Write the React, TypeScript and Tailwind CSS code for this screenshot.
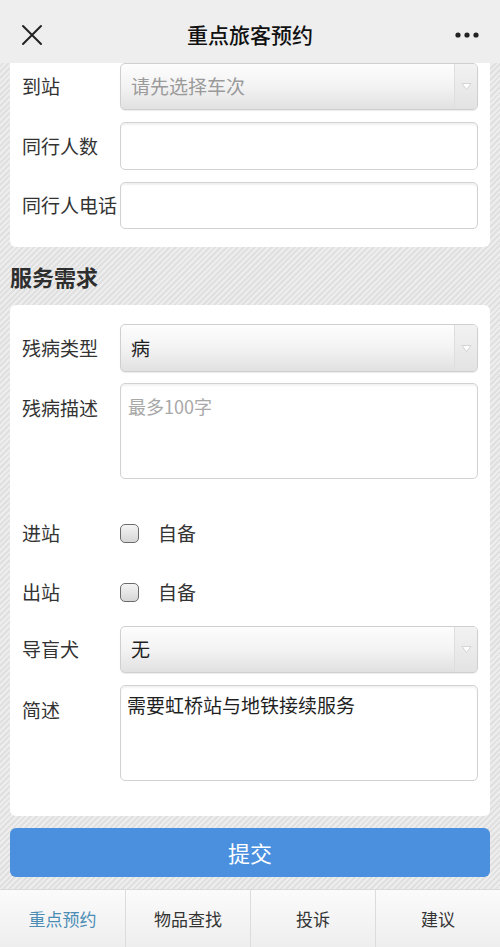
import React from "react";

function SelectBox({ text, placeholder }: { text: string; placeholder?: boolean }) {
  return (
    <div className="flex-1 h-full flex rounded-[5px] border border-[#cfcfcf] bg-[linear-gradient(to_bottom,#fdfdfd_0%,#f3f3f3_50%,#e1e1e1_100%)] shadow-[0_1px_1px_rgba(0,0,0,0.08)] overflow-hidden">
      <div className={`flex-1 flex items-center pl-[10px] text-[19px] ${placeholder ? "text-[#9a9a9a]" : "text-[#1f1f1f]"}`}>
        {text}
      </div>
      <div className="w-[23px] flex items-center justify-center border-l border-[#dedede] bg-[linear-gradient(to_bottom,#f2f2f2,#e3e3e3)]">
        <svg width="11" height="9" viewBox="0 0 11 9">
          <path d="M1 1.5 L10 1.5 L5.5 7.5 Z" fill="#fdfdfd" stroke="#cdcdcd" strokeWidth="0.8" />
        </svg>
      </div>
    </div>
  );
}

function Row({ label, children, h, className = "" }: { label: string; children: React.ReactNode; h: string; className?: string }) {
  return (
    <div className={`flex items-center ${h} ${className}`}>
      <div className="w-[98px] text-[19px] text-[#333]">{label}</div>
      {children}
    </div>
  );
}

function Checkbox() {
  return (
    <div className="flex items-center">
      <div className="w-[19px] h-[19px] rounded-[5px] border-[1.5px] border-[#6b6b6b] bg-[linear-gradient(to_bottom,#f4f4f4,#d6d6d6)]" />
      <span className="ml-[19px] text-[19px] text-[#333]">自备</span>
    </div>
  );
}

export default function App() {
  return (
    <div className="w-[500px] h-[947px] flex flex-col overflow-hidden font-['Noto_Sans_CJK_SC',sans-serif] text-[#333] bg-[repeating-linear-gradient(135deg,#ededed_0px,#ededed_2px,#e0e0e0_2px,#e0e0e0_4px)]">
      <header className="h-[63px] shrink-0 bg-[#eeeeee] grid grid-cols-[1fr_auto_1fr] items-center px-[20px] pt-[6px]">
        <div className="flex items-center">
          <svg width="24" height="24" viewBox="0 0 24 24">
            <path d="M3 3 L21 21 M21 3 L3 21" stroke="#222" strokeWidth="2" strokeLinecap="round" />
          </svg>
        </div>
        <div className="text-[21px] font-medium text-[#111]">重点旅客预约</div>
        <div className="flex justify-end">
          <svg width="26" height="8" viewBox="0 0 26 8">
            <circle cx="4" cy="4" r="2.6" fill="#222" />
            <circle cx="13" cy="4" r="2.6" fill="#222" />
            <circle cx="22" cy="4" r="2.6" fill="#222" />
          </svg>
        </div>
      </header>

      <main className="flex-1 flex flex-col px-[10px]">
        <section className="bg-white rounded-b-[6px] px-[12px] pb-[18px]">
          <Row label="到站" h="h-[47px]">
            <SelectBox text="请先选择车次" placeholder />
          </Row>
          <Row label="同行人数" h="h-[48px]" className="mt-[12px]">
            <div className="flex-1 h-full rounded-[5px] border border-[#d2d2d2] bg-white shadow-[inset_0_2px_2px_rgba(0,0,0,0.06)]" />
          </Row>
          <Row label="同行人电话" h="h-[47px]" className="mt-[12px]">
            <div className="flex-1 h-full rounded-[5px] border border-[#d2d2d2] bg-white shadow-[inset_0_2px_2px_rgba(0,0,0,0.06)]" />
          </Row>
        </section>

        <h2 className="h-[58px] flex items-center text-[22px] font-bold text-[#2e2e2e]">服务需求</h2>

        <section className="bg-white rounded-[6px] px-[12px] pt-[19px] pb-[35px]">
          <Row label="残病类型" h="h-[48px]">
            <SelectBox text="病" />
          </Row>
          <div className="flex items-start h-[96px] mt-[11px]">
            <div className="w-[98px] pt-[12px] leading-[26px] text-[19px] text-[#333]">残病描述</div>
            <div className="flex-1 h-full rounded-[5px] border border-[#d2d2d2] bg-white shadow-[inset_0_2px_2px_rgba(0,0,0,0.05)] pl-[7px] pt-[9px] leading-[26px] text-[18px] text-[#a8a8a8]">
              最多100字
            </div>
          </div>
          <Row label="进站" h="h-[48px]" className="mt-[30px]">
            <Checkbox />
          </Row>
          <Row label="出站" h="h-[48px]" className="mt-[11px]">
            <Checkbox />
          </Row>
          <Row label="导盲犬" h="h-[47px]" className="mt-[10px]">
            <SelectBox text="无" />
          </Row>
          <div className="flex items-start h-[96px] mt-[12px]">
            <div className="w-[98px] pt-[12px] leading-[26px] text-[19px] text-[#333]">简述</div>
            <div className="flex-1 h-full rounded-[5px] border border-[#d2d2d2] bg-white shadow-[inset_0_2px_2px_rgba(0,0,0,0.05)] pl-[6px] pt-[6px] leading-[26px] text-[19px] text-[#1f1f1f]">
              需要虹桥站与地铁接续服务
            </div>
          </div>
        </section>

        <button className="mt-[12px] h-[49px] rounded-[6px] bg-[#4a90df] text-white text-[22px] flex items-center justify-center">
          提交
        </button>
      </main>

      <nav className="mt-[12px] h-[58px] shrink-0 grid grid-cols-4 border-t border-[#d9d9d9] bg-[linear-gradient(to_bottom,#fbfbfb,#eeeeee)]">
        <div className="flex items-center justify-center text-[17px] text-[#4c8db5]">重点预约</div>
        <div className="flex items-center justify-center text-[17px] text-[#333] border-l border-[#dcdcdc]">物品查找</div>
        <div className="flex items-center justify-center text-[17px] text-[#333] border-l border-[#dcdcdc]">投诉</div>
        <div className="flex items-center justify-center text-[17px] text-[#333] border-l border-[#dcdcdc]">建议</div>
      </nav>
    </div>
  );
}
